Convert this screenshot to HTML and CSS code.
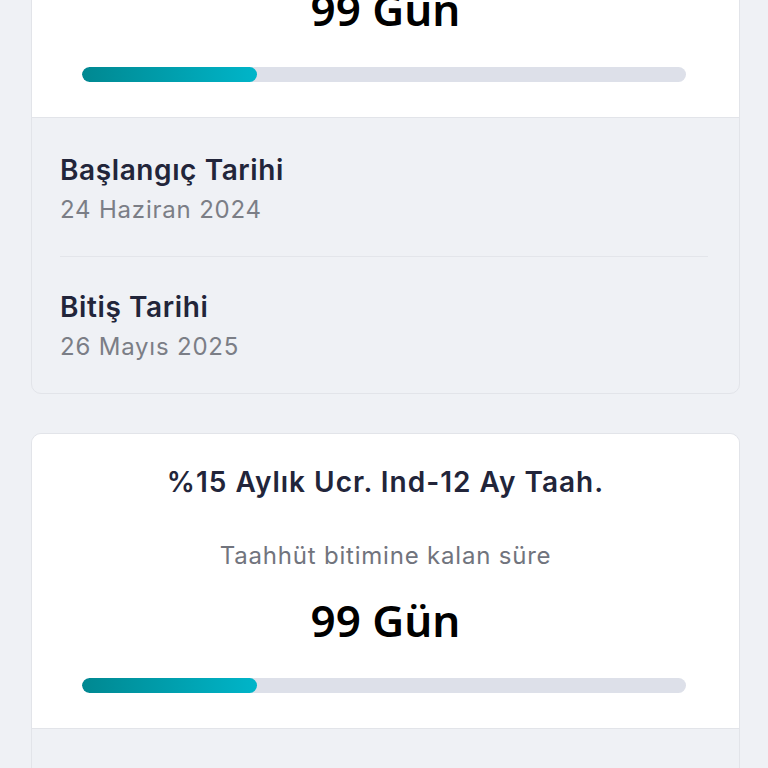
FILE: index.html
```html
<!DOCTYPE html>
<html lang="tr">
<head>
  <meta charset="UTF-8" />
  <meta name="viewport" content="width=device-width, initial-scale=1.0" />
  <title>Taahhüt Bilgileri</title>
  <link rel="stylesheet" href="styles.css">
</head>
<body>
  <div class="list">
    <div class="card">
      <div class="card-top">
        <h3 class="plan">%15 Aylık Ucr. Ind-12 Ay Taah.</h3>
        <p class="label">Taahhüt bitimine kalan süre</p>
        <div class="days">99 Gün</div>
        <div class="bar"><div class="fill" style="width: 29%;"></div></div>
      </div>
      <div class="dates">
        <div class="row">
          <div class="row-title">Başlangıç Tarihi</div>
          <div class="row-value">24 Haziran 2024</div>
        </div>
        <div class="row">
          <div class="row-title">Bitiş Tarihi</div>
          <div class="row-value">26 Mayıs 2025</div>
        </div>
      </div>
    </div>

    <div class="card">
      <div class="card-top">
        <h3 class="plan">%15 Aylık Ucr. Ind-12 Ay Taah.</h3>
        <p class="label">Taahhüt bitimine kalan süre</p>
        <div class="days">99 Gün</div>
        <div class="bar"><div class="fill" style="width: 29%;"></div></div>
      </div>
      <div class="dates">
        <div class="row">
          <div class="row-title">Başlangıç Tarihi</div>
          <div class="row-value">24 Haziran 2024</div>
        </div>
        <div class="row">
          <div class="row-title">Bitiş Tarihi</div>
          <div class="row-value">26 Mayıs 2025</div>
        </div>
      </div>
    </div>
  </div>
</body>
</html>
```

FILE: styles.css
```css
* {
  margin: 0;
  padding: 0;
  box-sizing: border-box;
}
body {
  background: #eff1f5;
  font-family: 'Inter', 'Noto Sans', sans-serif;
  overflow: hidden;
}
/* page is scrolled: first card starts above the fold */
.list {
  display: flex;
  flex-direction: column;
  gap: 39px;
  margin-top: -178px;
  padding: 0 28px 0 31px;
}
.card {
  background: #eff1f5;
  border: 1px solid #e2e4e9;
  border-radius: 10px;
  overflow: hidden;
}
.card-top {
  background: #fff;
  padding: 30px 0 35px;
  border-bottom: 1px solid #e2e4e9;
  text-align: center;
}
.plan {
  font-size: 28px;
  line-height: 36px;
  font-weight: 600;
  letter-spacing: 1px;
  color: #22253a;
}
.label {
  margin-top: 40px;
  font-size: 24px;
  line-height: 32px;
  letter-spacing: 0.8px;
  color: #71747d;
}
.days {
  margin-top: 20px;
  font-family: 'Noto Sans', sans-serif;
  font-size: 44px;
  line-height: 56px;
  font-weight: 600;
  color: #000;
}
.bar {
  width: 604px;
  height: 15px;
  margin: 30px 0 0 50px;
  background: #dde0e9;
  border-radius: 8px;
  overflow: hidden;
}
.fill {
  height: 100%;
  border-radius: 8px;
  background: linear-gradient(90deg, #008891, #00b5c9);
}
.dates {
  padding: 0 31px 0 28px;
}
.row {
  display: flex;
  flex-direction: column;
  gap: 6px;
  padding: 34px 0 30px;
}
.row + .row {
  border-top: 1px solid #e3e5ea;
  padding-top: 32px;
}
.row-title {
  font-size: 28px;
  line-height: 36px;
  font-weight: 600;
  letter-spacing: 0.6px;
  color: #22253a;
}
.row-value {
  font-size: 24px;
  line-height: 32px;
  letter-spacing: 0.8px;
  color: #7b7e86;
}
```
